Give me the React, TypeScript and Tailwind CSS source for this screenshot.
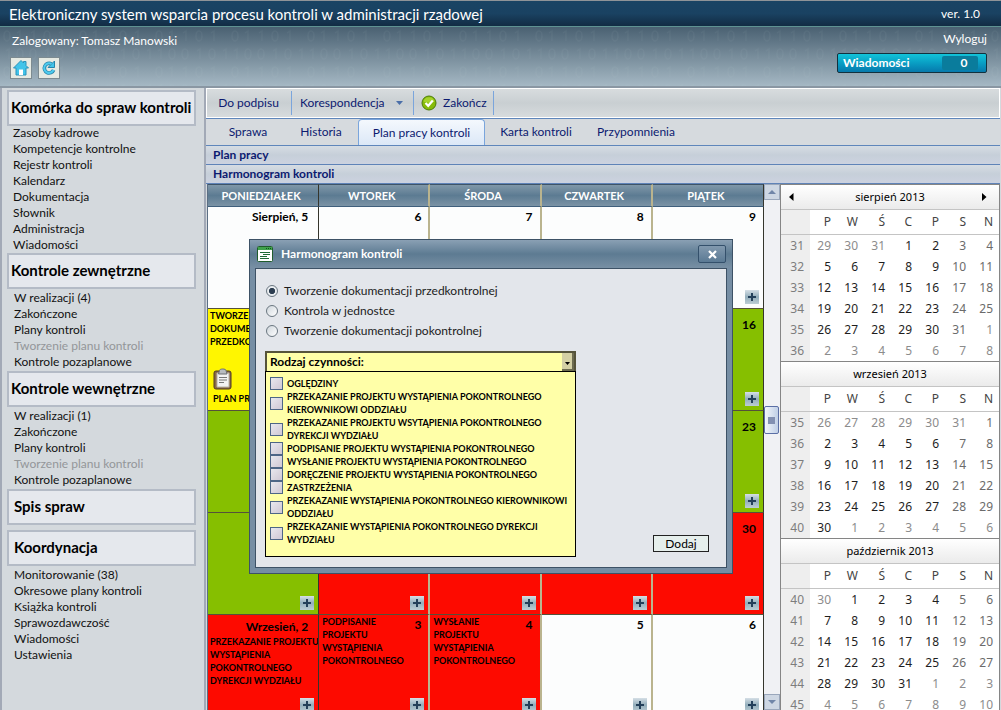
import type { ReactNode } from "react";

interface MenuItem {
  label: string;
  disabled?: boolean;
}

interface MenuSection {
  title: string;
  items: MenuItem[];
}

interface DayCell {
  color: "white" | "yellow" | "green" | "red";
  day?: string;
  text?: string;
  note?: string;
}

interface Month {
  name: string;
  weeks: number[];
  days: number[][];
  nav?: boolean;
}

const CONTROL_ITEMS: MenuItem[] = [
  { label: "Zakończone" },
  { label: "Plany kontroli" },
  { label: "Tworzenie planu kontroli", disabled: true },
  { label: "Kontrole pozaplanowe" },
];

const MENU: MenuSection[] = [
  {
    title: "Komórka do spraw kontroli",
    items: [
      { label: "Zasoby kadrowe" },
      { label: "Kompetencje kontrolne" },
      { label: "Rejestr kontroli" },
      { label: "Kalendarz" },
      { label: "Dokumentacja" },
      { label: "Słownik" },
      { label: "Administracja" },
      { label: "Wiadomości" },
    ],
  },
  { title: "Kontrole zewnętrzne", items: [{ label: "W realizacji (4)" }, ...CONTROL_ITEMS] },
  { title: "Kontrole wewnętrzne", items: [{ label: "W realizacji (1)" }, ...CONTROL_ITEMS] },
  { title: "Spis spraw", items: [] },
  {
    title: "Koordynacja",
    items: [
      { label: "Monitorowanie (38)" },
      { label: "Okresowe plany kontroli" },
      { label: "Książka kontroli" },
      { label: "Sprawozdawczość" },
      { label: "Wiadomości" },
      { label: "Ustawienia" },
    ],
  },
];

const WEEKDAYS = ["PONIEDZIAŁEK", "WTOREK", "ŚRODA", "CZWARTEK", "PIĄTEK"];

const SCHEDULE: DayCell[][] = [
  [
    { color: "white", day: "Sierpień, 5" },
    { color: "white", day: "6" },
    { color: "white", day: "7" },
    { color: "white", day: "8" },
    { color: "white", day: "9" },
  ],
  [
    { color: "yellow", text: "TWORZENIE\nDOKUMENTACJI\nPRZEDKONTROLNEJ", note: "PLAN PRACY" },
    { color: "white" },
    { color: "white" },
    { color: "white" },
    { color: "green", day: "16" },
  ],
  [
    { color: "green" },
    { color: "green" },
    { color: "green" },
    { color: "green" },
    { color: "green", day: "23" },
  ],
  [
    { color: "green" },
    { color: "red" },
    { color: "red" },
    { color: "red" },
    { color: "red", day: "30" },
  ],
  [
    { color: "red", day: "Wrzesień, 2", text: "PRZEKAZANIE PROJEKTU\nWYSTĄPIENIA\nPOKONTROLNEGO\nDYREKCJI WYDZIAŁU" },
    { color: "red", day: "3", text: "PODPISANIE\nPROJEKTU\nWYSTĄPIENIA\nPOKONTROLNEGO" },
    { color: "red", day: "4", text: "WYSŁANIE\nPROJEKTU\nWYSTĄPIENIA\nPOKONTROLNEGO" },
    { color: "white", day: "5" },
    { color: "white", day: "6" },
  ],
];

const CELL_BG = {
  white: "bg-[#fcfdfd]",
  yellow: "bg-[#fff600]",
  green: "bg-[#86bf00]",
  red: "bg-[#fd0a00]",
};

const MONTHS: Month[] = [
  {
    name: "sierpień 2013",
    nav: true,
    weeks: [31, 32, 33, 34, 35, 36],
    days: [
      [29, 30, 31, 1, 2, 3, 4],
      [5, 6, 7, 8, 9, 10, 11],
      [12, 13, 14, 15, 16, 17, 18],
      [19, 20, 21, 22, 23, 24, 25],
      [26, 27, 28, 29, 30, 31, 1],
      [2, 3, 4, 5, 6, 7, 8],
    ],
  },
  {
    name: "wrzesień 2013",
    weeks: [35, 36, 37, 38, 39, 40],
    days: [
      [26, 27, 28, 29, 30, 31, 1],
      [2, 3, 4, 5, 6, 7, 8],
      [9, 10, 11, 12, 13, 14, 15],
      [16, 17, 18, 19, 20, 21, 22],
      [23, 24, 25, 26, 27, 28, 29],
      [30, 1, 2, 3, 4, 5, 6],
    ],
  },
  {
    name: "październik 2013",
    weeks: [40, 41, 42, 43, 44, 45],
    days: [
      [30, 1, 2, 3, 4, 5, 6],
      [7, 8, 9, 10, 11, 12, 13],
      [14, 15, 16, 17, 18, 19, 20],
      [21, 22, 23, 24, 25, 26, 27],
      [28, 29, 30, 31, 1, 2, 3],
      [4, 5, 6, 7, 8, 9, 10],
    ],
  },
];

const PHASES = [
  "Tworzenie dokumentacji przedkontrolnej",
  "Kontrola w jednostce",
  "Tworzenie dokumentacji pokontrolnej",
];

const ACTIVITIES = [
  "OGLĘDZINY",
  "PRZEKAZANIE PROJEKTU WYSTĄPIENIA POKONTROLNEGO\nKIEROWNIKOWI ODDZIAŁU",
  "PRZEKAZANIE PROJEKTU WSYTĄPIENIA POKONTROLNEGO\nDYREKCJI WYDZIAŁU",
  "PODPISANIE PROJEKTU WYSTĄPIENIA POKONTROLNEGO",
  "WYSŁANIE PROJEKTU WYSTĄPIENIA POKONTROLNEGO",
  "DORĘCZENIE PROJEKTU WYSTĄPIENIA POKONTROLNEGO",
  "ZASTRZEŻENIA",
  "PRZEKAZANIE WYSTĄPIENIA POKONTROLNEGO KIEROWNIKOWI\nODDZIAŁU",
  "PRZEKAZANIE WYSTĄPIENIA POKONTROLNEGO DYREKCJI\nWYDZIAŁU",
];

// first row can start in the previous month, last two can run into the next one
function isOtherMonth(row: number, day: number) {
  return (row === 0 && day > 20) || (row >= 4 && day < 15);
}

function BinaryPattern() {
  return (
    <svg className="absolute inset-0 h-full w-full" aria-hidden="true">
      <defs>
        <pattern id="bits" width="76" height="36" patternUnits="userSpaceOnUse">
          <g fill="none" stroke="#c8d8e2" strokeOpacity="0.05" strokeWidth="1.4">
            <ellipse cx="7" cy="9" rx="3" ry="5" />
            <path d="M17 6l3-2v10M31 6l3-2v10M59 6l3-2v10" />
            <ellipse cx="47" cy="9" rx="3" ry="5" />
            <path d="M6 24l3-2v10M45 24l3-2v10M71 24l3-2v10" />
            <ellipse cx="20" cy="27" rx="3" ry="5" />
            <ellipse cx="33" cy="27" rx="3" ry="5" />
            <ellipse cx="60" cy="27" rx="3" ry="5" />
          </g>
        </pattern>
      </defs>
      <rect width="100%" height="100%" fill="url(#bits)" />
    </svg>
  );
}

function HomeIcon() {
  return (
    <svg width="18" height="18" viewBox="0 0 18 18" aria-hidden="true">
      <path d="M9 1.5 1.5 9H4v7h10V9h2.500L14 6.500V2.500h-2.500v1.500z" fill="#41c4ea" stroke="#2b93bb" strokeLinejoin="round" />
      <path d="M7 10.500h4V16H7z" fill="#fff" />
    </svg>
  );
}

function RefreshIcon() {
  return (
    <svg width="18" height="18" viewBox="0 0 18 18" fill="none" aria-hidden="true">
      <path d="M11.500 5A4.800 4.800 0 1 0 13.600 11" stroke="#2585ab" strokeWidth="3.600" />
      <path d="M14.500 2v6.500H8z" fill="#41c4ea" stroke="#2585ab" strokeLinejoin="round" />
      <path d="M11.500 5A4.800 4.800 0 1 0 13.500 10.800" stroke="#4fcbee" strokeWidth="2" />
    </svg>
  );
}

function CheckIcon() {
  return (
    <svg width="16" height="16" viewBox="0 0 16 16" aria-hidden="true">
      <circle cx="8" cy="8" r="7" fill="#86bb0a" stroke="#4d7d08" />
      <path d="M2.500 6.500a5.700 5.700 0 0 1 11 0c-3 1.500-8 1.500-11 0z" fill="#a5d32c" />
      <path d="m4.500 8 2.700 2.800 4.600-5.300" fill="none" stroke="#fff" strokeWidth="2.200" />
    </svg>
  );
}

function WindowIcon() {
  return (
    <svg width="16" height="16" viewBox="0 0 16 16" aria-hidden="true">
      <rect x="0.500" y="0.500" width="15" height="15" rx="1" fill="#fff" stroke="#1f5c2c" />
      <path d="M1 1h14v3H1z" fill="#3fa24c" />
      <path d="M9 2.500h1M11 2.500h1M13 2.500h1" stroke="#125020" />
      <path d="M3 6.500h10M6 8.500h7M3 10.500h7M3 12.500h9" stroke="#1f6a36" />
    </svg>
  );
}

function ClipboardIcon() {
  return (
    <svg width="20" height="22" viewBox="0 0 20 22" aria-hidden="true">
      <rect x="1" y="3" width="17" height="18" rx="2" fill="#8b6a48" stroke="#4f3b26" />
      <path d="M4 5h12v14H4z" fill="#f3f3f3" stroke="#b9b2a6" />
      <path d="M6.500 2.500c0-2 6.500-2 6.500 0l1 3.500H5.500z" fill="#b8bcc0" stroke="#6c6f73" />
      <path d="M6 9.500h8M6 12h8M6 14.500h5" stroke="#777" />
    </svg>
  );
}

function PlusButton() {
  return (
    <button
      type="button"
      aria-label="Dodaj czynność"
      className="absolute right-1 bottom-1 flex size-3.5 items-center justify-center bg-linear-to-b from-[#d5dfe6] via-[#93aebb] to-[#bccdd5]"
    >
      <svg width="8" height="8" viewBox="0 0 8 8" aria-hidden="true">
        <path d="M4 0v8M0 4h8" stroke="#24405a" strokeWidth="2" />
      </svg>
    </button>
  );
}

function PanelTitle({ children }: { children: ReactNode }) {
  return (
    <h2 className="h-[19px] border-b border-[#5f83b8] bg-linear-to-b from-[#d6dce3] via-[#c6cfd9] to-[#ccd2e0] pl-[7px] text-[12px] leading-[18px] font-bold text-[#0c1a70]">
      {children}
    </h2>
  );
}

function Header() {
  return (
    <header className="shrink-0 text-white">
      <div className="flex h-[27px] items-center justify-between border-t border-b border-t-[#8f9498] border-b-[#5f9292] bg-linear-to-b from-[#1a4464] via-[#1a4262] to-[#122c44] pr-[21px] pl-[9px]">
        <h1 className="text-[15px] leading-5">Elektroniczny system wsparcia procesu kontroli w administracji rządowej</h1>
        <span className="text-[12px] leading-4">ver. 1.0</span>
      </div>
      <div className="relative h-[61px] border-b-2 border-[#8a97a3] bg-linear-to-b from-[#4a6172] via-[#788d9b] to-[#a5b8c4]">
        <BinaryPattern />
        <div className="relative flex justify-between pr-3.5 pl-2.5">
          <div className="pt-1.5">
            <p className="pl-0.5 text-[12px] leading-4">Zalogowany: Tomasz Manowski</p>
            <div className="mt-2 flex gap-1.5">
              <button type="button" aria-label="Strona główna" className="flex size-[22px] items-center justify-center border border-[#7d8b91] bg-[#e6eae3]">
                <HomeIcon />
              </button>
              <button type="button" aria-label="Odśwież" className="flex size-[22px] items-center justify-center border border-[#7d8b91] bg-[#e6eae3]">
                <RefreshIcon />
              </button>
            </div>
          </div>
          <div className="flex flex-col items-end pt-1">
            <a href="#" className="text-[12px] leading-4">Wyloguj</a>
            <button
              type="button"
              className="mt-1.5 flex h-5 w-[150px] items-center justify-between rounded-xs border border-[#12313e] bg-linear-to-b from-[#12c4da] to-[#0779ac] pr-2 pl-[5px] text-[12px] leading-4 font-bold"
            >
              Wiadomości
              <span className="flex h-3.5 w-9 items-center justify-center rounded-xs bg-[#0a7c9c] pl-2">0</span>
            </button>
          </div>
        </div>
      </div>
    </header>
  );
}

function Sidebar() {
  return (
    <nav className="w-[206px] shrink-0 overflow-hidden border-r-2 border-l-2 border-r-[#a2a9b6] border-l-[#a2a9b6] bg-[#d4d9dd] pt-0.5 pr-2 pl-[5px]">
      {MENU.map((section, i) => (
        <section key={section.title} className={section.items.length ? "" : "mb-[5px]"}>
          <h2
            className={`h-9 border-2 border-[#b4bbc6] bg-[#e5e8ed] text-[15px] leading-[30px] font-bold text-black ${
              i > 2 ? "pl-[5px]" : "pl-0.5"
            }`}
          >
            {section.title}
          </h2>
          {section.items.length > 0 && (
            <ul className={i === 0 ? "-mt-px pl-1.5" : "pt-px pb-px pl-[7px]"}>
              {section.items.map((item) => (
                <li key={item.label} className="text-[12px] leading-4">
                  <a href="#" className={item.disabled ? "text-[#939699]" : "text-[#111]"}>{item.label}</a>
                </li>
              ))}
            </ul>
          )}
        </section>
      ))}
    </nav>
  );
}

function Toolbar() {
  return (
    <div className="flex h-[31px] shrink-0 items-center border-b border-[#5f86bb] bg-linear-to-b from-[#d9dddf] via-[#c9cfd2] to-[#d8dcde] text-[12px] leading-4 text-[#0c1a70] shadow-[inset_0_0_0_1px_#fff]">
      <button type="button" className="h-6 w-[86px] border-r border-[#7aa5dc]">Do podpisu</button>
      <button type="button" className="flex h-6 w-[122px] items-center justify-between border-r border-[#7aa5dc] pr-2.5 pl-2">
        Korespondencja
        <svg width="7" height="4" viewBox="0 0 7 4" aria-hidden="true">
          <path d="M0 0h7L3.500 4z" fill="#4a6ea8" />
        </svg>
      </button>
      <button type="button" className="flex h-6 w-20 items-center gap-1.5 border-r border-[#7aa5dc] pl-[7px]">
        <CheckIcon />
        Zakończ
      </button>
    </div>
  );
}

function Tabs() {
  return (
    <div className="flex h-[27px] shrink-0 items-center border-b border-[#5f86bb] bg-[#d6dade] text-[12px] leading-4 text-[#0c1a70]">
      <button type="button" className="w-[84px]">Sprawa</button>
      <button type="button" className="w-[62px]">Historia</button>
      <button type="button" className="ml-1.5 h-full w-[127px] rounded-t border border-b-0 border-[#7aa5dc] bg-linear-to-b from-[#f4f8fd] to-[#dce8f7]">
        Plan pracy kontroli
      </button>
      <button type="button" className="w-[102px]">Karta kontroli</button>
      <button type="button" className="w-[98px]">Przypomnienia</button>
    </div>
  );
}

function ScheduleCell({ cell, row, first }: { cell: DayCell; row: number; first: boolean }) {
  return (
    <div className="relative h-full overflow-hidden">
      {first ? (
        <div>
          {cell.day && (
            <p className={`pr-2.5 text-right text-[12px] ${row === 0 ? "leading-5" : "pt-1 leading-4"}`}>{cell.day}</p>
          )}
          {cell.text && <p className="pl-0.5 text-[9px] leading-[13px] whitespace-pre">{cell.text}</p>}
        </div>
      ) : (
        <div className="flex justify-between pr-[7px] pl-[3px]">
          <p className="text-[9px] leading-[13px] whitespace-pre">{cell.text}</p>
          {cell.day && (
            <p className={`text-[12px] leading-5 ${row > 0 && row < 4 ? "pt-1.5" : ""}`}>{cell.day}</p>
          )}
        </div>
      )}
      {cell.note && (
        <div className="pt-5 pl-[5px]">
          <ClipboardIcon />
          <p className="pt-0.5 text-[9px] leading-[13px]">{cell.note}</p>
        </div>
      )}
      <PlusButton />
    </div>
  );
}

function Schedule() {
  return (
    <div className="min-w-0 flex-1 overflow-hidden pl-px">
      <table className="h-px w-full table-fixed border-separate border-spacing-0 border-l border-[#5c6f84]">
        <thead>
          <tr>
            {WEEKDAYS.map((name, i) => (
              <th
                key={name}
                className={`h-[23px] border-t border-b border-t-[#3f5468] border-b-[#3f5f7c] bg-linear-to-b from-[#8198a9] via-[#5c7b92] to-[#7b93a5] p-0 pr-1 text-[11px] leading-4 text-white ${
                  i === 0 || i === 4 ? "border-r border-r-[#35352c]" : "border-r-2 border-r-[#bab48e]"
                }`}
              >
                {name}
              </th>
            ))}
          </tr>
        </thead>
        <tbody>
          {SCHEDULE.map((week, row) => (
            <tr key={row}>
              {week.map((cell, i) => (
                <td
                  key={i}
                  className={`h-[102px] border-b border-b-[#55513a] p-0 align-top font-bold text-black ${CELL_BG[cell.color]} ${
                    i === 0 || i === 4 ? "border-r border-r-[#35352c]" : "border-r-2 border-r-[#bab48e]"
                  }`}
                >
                  <ScheduleCell cell={cell} row={row} first={i === 0} />
                </td>
              ))}
            </tr>
          ))}
        </tbody>
      </table>
    </div>
  );
}

function ScrollButton({ down = false }: { down?: boolean }) {
  return (
    <button
      type="button"
      aria-label={down ? "Przewiń w dół" : "Przewiń w górę"}
      className="flex size-4 shrink-0 items-center justify-center border border-[#9aa7bb] bg-[#ced7e3]"
    >
      <svg width="8" height="4" viewBox="0 0 8 4" aria-hidden="true">
        <path d={down ? "M0 0h8L4 4z" : "M0 4h8L4 0z"} fill="#7186a8" />
      </svg>
    </button>
  );
}

function Scrollbar() {
  return (
    <div className="flex w-4 shrink-0 flex-col bg-[#f0f1f4]">
      <ScrollButton />
      <div className="flex-1 pt-[206px]">
        <div className="flex h-7 w-[15px] items-center justify-center rounded-xs border border-[#5b6fa5] bg-linear-to-r from-[#f2f6fb] to-[#c0cfe6]">
          <span className="size-[7px] bg-[#8290b2]" />
        </div>
      </div>
      <ScrollButton down />
    </div>
  );
}

function MonthTable({ month }: { month: Month }) {
  return (
    <section>
      <div className="flex h-[26px] items-center justify-between border-t border-b border-t-[#858585] border-b-[#c4c4c4] bg-linear-to-b from-white to-[#ebebeb] pr-3 pl-2 text-black">
        <button type="button" aria-label="Poprzedni miesiąc" className={month.nav ? "" : "invisible"}>
          <svg width="5" height="8" viewBox="0 0 5 8" aria-hidden="true">
            <path d="M4.500 0v8L0 4z" />
          </svg>
        </button>
        <h3 className="pl-1 text-[11px] leading-4">{month.name}</h3>
        <button type="button" aria-label="Następny miesiąc" className={month.nav ? "" : "invisible"}>
          <svg width="5" height="8" viewBox="0 0 5 8" aria-hidden="true">
            <path d="M0 0v8l4.500-4z" />
          </svg>
        </button>
      </div>
      <table className="w-full table-fixed border-separate border-spacing-0 text-right text-[12px] leading-3">
        <thead>
          <tr className="text-[#444]">
            <th className="h-[25px] w-[29px] border-b border-[#c4c4c4] bg-[#eee] p-0" />
            {["P", "W", "Ś", "C", "P", "S", "N"].map((d, i) => (
              <th key={i} className="border-b border-[#c4c4c4] p-0 pr-1.5 font-normal">{d}</th>
            ))}
          </tr>
        </thead>
        <tbody>
          {month.days.map((week, row) => (
            <tr key={row}>
              <td className="h-[21px] bg-[#eee] p-0 pr-1.5 text-[#7d7d7d]">{month.weeks[row]}</td>
              {week.map((day, i) => (
                <td
                  key={i}
                  className={`p-0 pr-1.5 ${isOtherMonth(row, day) ? "text-[#8c8c8c]" : i > 4 ? "text-[#6b6b6b]" : "text-[#1e1e1e]"}`}
                >
                  {day}
                </td>
              ))}
            </tr>
          ))}
        </tbody>
      </table>
    </section>
  );
}

function ScheduleDialog() {
  return (
    <div
      role="dialog"
      aria-label="Harmonogram kontroli"
      className="absolute top-[239px] left-[249px] w-[484px] border border-[#3d5266] bg-[#768ea4] px-[5px] pb-[5px]"
    >
      <div className="-mx-[5px] flex h-7 items-center bg-linear-to-b from-[#8aa0b4] via-[#5d7b92] to-[#7890a4] pr-1.5 pl-[7px]">
        <WindowIcon />
        <h2 className="flex-1 pl-2 text-[12px] leading-4 font-bold text-white">Harmonogram kontroli</h2>
        <button
          type="button"
          aria-label="Zamknij"
          className="flex h-[18px] w-7 items-center justify-center rounded-xs border border-[#34506b] bg-linear-to-b from-[#8299ae] to-[#5b7a94]"
        >
          <svg width="9" height="9" viewBox="0 0 9 9" aria-hidden="true">
            <path d="m1 1 7 7M8 1 1 8" stroke="#fff" strokeWidth="2.200" />
          </svg>
        </button>
      </div>
      <form className="flex items-end justify-between border border-[#3d5266] bg-[#e3e6eb] pt-3 pr-[17px] pb-2.5 pl-[9px]">
        <div className="w-[311px]">
          {PHASES.map((phase, i) => (
            <label key={phase} className="flex h-5 items-center gap-1.5 pl-px text-[12px] leading-4 text-[#1c1c1c]">
              <input
                type="radio"
                name="phase"
                defaultChecked={i === 0}
                className="size-3 appearance-none rounded-full border border-[#6a7680] bg-linear-to-br from-[#cfd6dc] to-white checked:bg-[radial-gradient(circle,#2c3d50_40%,#e9edf0_46%)]"
              />
              {phase}
            </label>
          ))}
          <div className="relative mt-2.5 flex">
            <select
              aria-label="Rodzaj czynności"
              className="h-5 w-full appearance-none border-2 border-b-0 border-[#55533a] bg-[#ffffa8] pl-[3px] text-[12px] leading-4 font-bold text-black"
            >
              <option>Rodzaj czynności:</option>
            </select>
            <span className="pointer-events-none absolute top-0.5 right-0.5 flex h-[18px] w-3 items-center justify-center border-r-2 border-b-2 border-[#6d6b50] bg-[#d4d0a4] pt-1">
              <svg width="5" height="3" viewBox="0 0 5 3" aria-hidden="true">
                <path d="M0 0h5L2.500 3z" />
              </svg>
            </span>
          </div>
          <div className="border border-black bg-[#ffffa8] pt-[5px] pr-1 pb-2.5 pl-1">
            {ACTIVITIES.map((name) => (
              <label key={name} className="flex items-center gap-1 text-[9px] leading-[13px] font-bold whitespace-pre text-black">
                <input
                  type="checkbox"
                  className="size-[13px] shrink-0 appearance-none border border-[#4d6686] bg-linear-to-br from-[#e8e8ee] to-[#cfc8d4]"
                />
                {name}
              </label>
            ))}
          </div>
        </div>
        <button type="button" className="mb-[5px] h-[17px] w-14 border border-[#222] bg-[#e6efec] text-[12px] leading-[14px] text-black">
          Dodaj
        </button>
      </form>
    </div>
  );
}

export default function App() {
  return (
    <div className="relative flex h-screen flex-col overflow-hidden bg-[#d4d9dd] font-['Lato','Noto_Sans',sans-serif]">
      <Header />
      <div className="flex min-h-0 flex-1">
        <Sidebar />
        <main className="flex min-w-0 flex-1 flex-col border-r border-[#d4d9dd]">
          <Toolbar />
          <Tabs />
          <PanelTitle>Plan pracy</PanelTitle>
          <PanelTitle>Harmonogram kontroli</PanelTitle>
          <div className="flex min-h-0 flex-1">
            <Schedule />
            <Scrollbar />
            <aside className="w-[220px] shrink-0 overflow-hidden border-r border-l border-[#858585] bg-white font-['Noto_Sans',sans-serif]">
              {MONTHS.map((month) => (
                <MonthTable key={month.name} month={month} />
              ))}
            </aside>
          </div>
        </main>
      </div>
      <ScheduleDialog />
    </div>
  );
}
